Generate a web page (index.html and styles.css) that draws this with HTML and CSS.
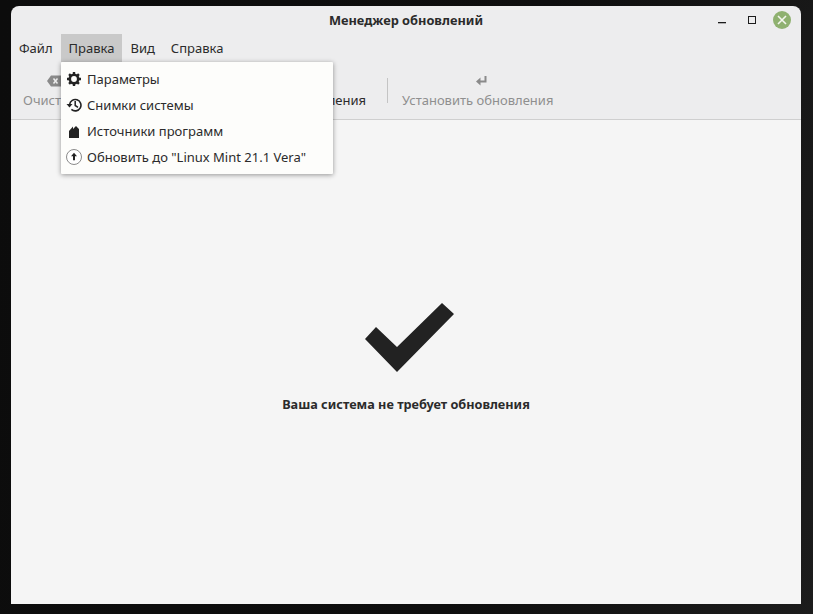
FILE: index.html
```html
<!DOCTYPE html>
<html lang="ru">
<head>
<meta charset="utf-8">
<title>Менеджер обновлений</title>
<link rel="stylesheet" href="styles.css">
</head>
<body>
<div class="window">
  <header class="titlebar">
    <h1 class="title">Менеджер обновлений</h1>
    <div class="controls">
      <span class="ctl"><svg width="12" height="12" viewBox="0 0 12 12"><rect x="2" y="8" width="8" height="1.300" fill="#1c1c1c"/></svg></span>
      <span class="ctl"><svg width="12" height="12" viewBox="0 0 12 12"><rect x="2.500" y="2.500" width="7" height="7" fill="none" stroke="#1c1c1c"/></svg></span>
      <span class="ctl close"><svg width="18" height="18" viewBox="0 0 18 18"><circle cx="9" cy="9" r="9" fill="#8fb170"/><path d="M5 5l8 8M13 5l-8 8" stroke="#f4f6ef" stroke-width="1.600" fill="none"/></svg></span>
    </div>
  </header>
  <nav class="menubar">
    <span class="mi">Файл</span>
    <span class="mi open">Правка</span>
    <span class="mi">Вид</span>
    <span class="mi">Справка</span>
  </nav>
  <div class="toolbar">
    <div class="tb disabled first">
      <svg width="14" height="14" viewBox="0 0 14 14"><path d="M4 1.500h10v11H4L0 7z" fill="#8a8a8a"/><path d="M6.500 4.500l4 5M10.500 4.500l-4 5" stroke="#eee" stroke-width="1.500"/></svg>
      <span>Очистить</span>
    </div>
    <div class="tb mid">
      <span class="tb-label">Проверить обновления</span>
    </div>
    <div class="sep"></div>
    <div class="tb disabled">
      <svg width="20" height="14" viewBox="0 0 20 14"><path d="M17.500 2v5.500H11" fill="none" stroke="#8a8a8a" stroke-width="2"/><path d="M12.500 3.500v8L8 7.500z" fill="#8a8a8a"/></svg>
      <span>Установить обновления</span>
    </div>
  </div>
  <main class="content">
    <svg class="check" width="90" height="70" viewBox="0 0 90 70"><path d="M0 36L11 24 32 44 77 0 89 11 32 69z" fill="#222"/></svg>
    <p class="status">Ваша система не требует обновления</p>
  </main>
  <ul class="menu">
    <li><svg width="16" height="16" viewBox="0 0 16 16"><circle cx="8" cy="8" r="4.200" fill="none" stroke="#222" stroke-width="2.600"/><path d="M8 1v3M8 12v3M1 8h3M12 8h3M3.050 3.050l2.100 2.100M10.850 10.850l2.100 2.100M12.950 3.050l-2.100 2.100M5.150 10.850l-2.100 2.100" stroke="#222" stroke-width="2.400"/></svg><span>Параметры</span></li>
    <li><svg width="16" height="16" viewBox="0 0 16 16"><path d="M3.600 7.500a5.700 5.700 0 1 1 1.800 4.900" fill="none" stroke="#222" stroke-width="1.600"/><path d="M0.500 7h6l-3 3.500z" fill="#222"/><path d="M9.200 4v4.500l2.800 1.800" fill="none" stroke="#222" stroke-width="1.500"/></svg><span>Снимки системы</span></li>
    <li><svg width="16" height="16" viewBox="0 0 16 16"><path d="M3 8l4-4.500V6l3-3 3 3v9H3z" fill="#222"/></svg><span>Источники программ</span></li>
    <li><svg width="16" height="16" viewBox="0 0 16 16"><circle cx="8" cy="8" r="7.500" fill="#fff" stroke="#8a8a8a"/><path d="M8 3.800L11 7.300H9v4H7v-4H5z" fill="#222"/></svg><span>Обновить до "Linux Mint 21.1 Vera"</span></li>
  </ul>
</div>
</body>
</html>
```
FILE: styles.css
```css
* { box-sizing: border-box; }
html, body { margin: 0; height: 100%; }
body {
  width: 813px;
  height: 614px;
  overflow: hidden;
  padding: 6px 12px 10px 11px;
  background: linear-gradient(100deg, #0c0c0c 0%, #0e0e0e 60%, #1c1c1c 100%);
  font-family: "Noto Sans", sans-serif;
  font-size: 13px;
  color: #2b2b2b;
}
.window {
  position: relative;
  height: 598px;
  border-radius: 8px 8px 0 0;
  background: #ededee;
  display: flex;
  flex-direction: column;
}
.titlebar {
  height: 28px;
  flex: none;
  position: relative;
  display: flex;
  align-items: center;
  justify-content: center;
}
.title { margin: 0; font-size: 12.800px; font-weight: 700; color: #2b2b2b; }
.controls {
  position: absolute;
  right: 10px;
  top: 5px;
  display: flex;
  align-items: center;
  gap: 12px;
}
.ctl { display: flex; width: 18px; height: 18px; align-items: center; justify-content: center; }
.menubar { height: 28px; flex: none; display: flex; }
.mi { display: flex; align-items: center; padding: 0 8px; }
.mi.open { background: #c9c9c9; }
.toolbar {
  height: 58px;
  flex: none;
  display: flex;
  align-items: flex-start;
  padding: 9px 0 0 12px;
  border-bottom: 1px solid #cfcfcf;
}
.tb { display: flex; flex-direction: column; align-items: center; gap: 3px; height: 38px; justify-content: flex-end; }
.tb.disabled { color: #8f8f8f; }
.tb.first { width: 195px; align-items: flex-start; }
.tb.first svg { margin-left: 24px; }
.tb.mid { width: 148px; align-items: flex-end; margin-right: 21px; }
.tb-label { white-space: nowrap; color: #2b2b2b; }
.sep { width: 1px; height: 25px; margin: 7px 14px 0 0; background: #c4c4c4; }
.content {
  flex: 1;
  background: #f5f5f5;
  display: flex;
  flex-direction: column;
  align-items: center;
  padding-top: 183px;
}
.check { display: block; margin-left: 8px; }
.status { margin: 22px 0 0; font-weight: 700; font-size: 12.700px; color: #2b2b2b; }
.menu {
  position: absolute;
  left: 50px;
  top: 56px;
  width: 272px;
  height: 112px;
  margin: 0;
  padding: 4px 0;
  list-style: none;
  background: #fdfdfb;
  box-shadow: 0 1px 5px rgba(0,0,0,.4);
  border-radius: 1px;
}
.menu li { height: 26px; display: flex; align-items: center; gap: 5px; padding-left: 5px; }
.menu svg { flex: none; }
```
